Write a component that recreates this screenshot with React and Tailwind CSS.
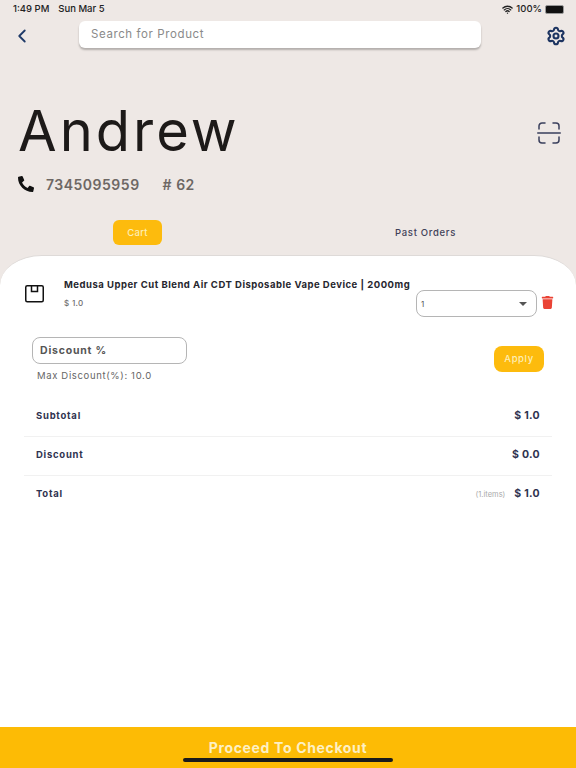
import { ChevronLeft, Settings, Wifi } from 'lucide-react';
import { FaPhone, FaTrash } from 'react-icons/fa';

function TotalRow({ label, value, note, border }) {
  return (
    <div className={`h-[39px] pb-[3px] flex items-center justify-between pl-3 pr-3 ${border ? 'border-b border-[#f1f1f1]' : ''}`}>
      <span className="text-[9.5px] font-bold tracking-[0.75px] text-[#2f3350]">{label}</span>
      <div className="flex items-center gap-[9px]">
        {note && <span className="text-[7.5px] text-[#a9a9a9]">{note}</span>}
        <span className="text-[10.5px] font-bold tracking-[0.3px] text-[#2f3350]">{value}</span>
      </div>
    </div>
  );
}

export default function App() {
  return (
    <div className="relative w-[576px] h-[768px] overflow-hidden flex flex-col bg-[#eee8e5] font-['Inter',sans-serif]">
      {/* status bar */}
      <div className="h-[17px] pt-[2px] pl-[13px] pr-[12px] flex items-center justify-between text-[9.5px] font-medium text-[#222]">
        <div className="flex gap-[9px]">
          <span>1:49 PM</span>
          <span>Sun Mar 5</span>
        </div>
        <div className="flex items-center gap-[3px]">
          <Wifi size={11} strokeWidth={3} />
          <span>100%</span>
          <div className="w-[19px] h-[9px] rounded-[2px] bg-[#111] border border-[#999]" />
        </div>
      </div>

      {/* top bar */}
      <div className="h-[27px] mt-[4px] flex items-center">
        <ChevronLeft size={22} strokeWidth={2} className="ml-[11px] mt-[2px] text-[#1f3a68]" />
        <div className="ml-[46px] w-[402px] h-[27px] rounded-[6px] bg-white shadow-[0_2px_2px_rgba(0,0,0,0.25)] pl-3 pt-px flex items-center text-[11.5px] tracking-[0.6px] text-[#8a8a8a]">
          Search for Product
        </div>
        <Settings size={20} strokeWidth={2.5} className="ml-[65px] mt-[2px] text-[#1d3461]" />
      </div>

      {/* customer */}
      <div className="mt-[48px] h-[70px] pl-[18px] pr-[15px] flex items-center justify-between">
        <span className="text-[56px] leading-none tracking-[3px] text-[#1d1a19]">Andrew</span>
        <svg width="24" height="22" viewBox="0 0 24 22" fill="none" stroke="#3a3f5c" strokeWidth="1.5" strokeLinecap="round" className="mt-[4px]">
          <path d="M2 7V4a3 3 0 0 1 3-3h3M16 1h3a3 3 0 0 1 3 3v3M2 15v3a3 3 0 0 0 3 3h3M16 21h3a3 3 0 0 0 3-3v-3" />
          <path d="M0.75 11h22.5" />
        </svg>
      </div>
      <div className="mt-[6px] h-[24px] pl-[18px] flex items-center text-[#6d6764] font-semibold text-[14px] tracking-[0.5px]">
        <FaPhone size={16} className="text-[#111] scale-x-[-1]" />
        <span className="ml-[12px]">7345095959</span>
        <span className="ml-[23px]"># 62</span>
      </div>

      {/* tabs */}
      <div className="mt-[24px] h-[25px] flex items-center">
        <div className="ml-[113px] w-[49px] h-[25px] pt-px rounded-[6px] bg-[#fdbb0d] flex items-center justify-center text-[9.5px] font-medium tracking-[0.3px] text-[#fdeeb5]">
          Cart
        </div>
        <div className="ml-[233px] pt-px text-[9.5px] font-medium tracking-[0.7px] text-[#3f4058]">Past Orders</div>
      </div>

      {/* cart card */}
      <div className="mt-[10px] flex-1 bg-white rounded-[42px_42px_0_0/30px_30px_0_0] border-t border-[#dedad8] relative">
        <div className="flex pt-[19px] pl-[25px]">
          <svg width="19" height="18" viewBox="0 0 19 18" fill="none" stroke="#111" strokeWidth="1.5" className="mt-[10px]">
            <rect x="0.75" y="0.75" width="17.5" height="16" rx="1.5" />
            <path d="M6.5 1v5.5h6V1" />
          </svg>
          <div className="ml-[20px] w-[352px] pt-[2px]">
            <div className="text-[9.5px] font-bold leading-[16px] tracking-[0.5px] text-[#26262e] whitespace-nowrap">
              Medusa Upper Cut Blend Air CDT Disposable Vape Device | 2000mg
            </div>
            <div className="mt-[4px] text-[8px] font-medium tracking-[0.3px] text-[#6f6f6f]">$ 1.0</div>
          </div>
          <div className="mt-[15px] w-[121px] h-[27px] rounded-[8px] border border-[#b5b5b5] pl-[4px] pr-[9px] flex items-center justify-between text-[8px] text-[#555]">
            <span>1</span>
            <span className="w-0 h-0 border-x-[4px] border-x-transparent border-t-[4px] border-t-[#555]" />
          </div>
          <FaTrash size={13} className="ml-[4px] mt-[21px] text-[#ea4335]" />
        </div>

        <div className="flex mt-[20px] pl-[32px]">
          <div>
            <div className="w-[155px] h-[27px] rounded-[8px] border border-[#b5b5b5] pl-[7px] flex items-center text-[10.5px] font-bold tracking-[0.8px] text-[#555]">
              Discount %
            </div>
            <div className="mt-[5px] ml-[5px] text-[9.5px] tracking-[0.65px] text-[#666]">Max Discount(%): 10.0</div>
          </div>
          <div className="ml-[307px] mt-[9px] w-[50px] h-[26px] rounded-[8px] bg-[#fdbb0d] flex items-center justify-center text-[9.5px] font-medium tracking-[0.6px] text-[#fdeeb5]">
            Apply
          </div>
        </div>

        <div className="mt-[15px] ml-[24px] w-[528px]">
          <TotalRow label="Subtotal" value="$ 1.0" border />
          <TotalRow label="Discount" value="$ 0.0" border />
          <TotalRow label="Total" value="$ 1.0" note="(1.items)" />
        </div>
      </div>

      {/* checkout */}
      <div className="h-[41px] bg-[#fdbb05] flex items-center justify-center text-[14px] font-bold tracking-[0.65px] text-[#fdf0c4]">
        Proceed To Checkout
      </div>
      <div className="absolute left-[183px] bottom-[6px] w-[210px] h-[4px] rounded-full bg-[#1a1a1a]" />
    </div>
  );
}
